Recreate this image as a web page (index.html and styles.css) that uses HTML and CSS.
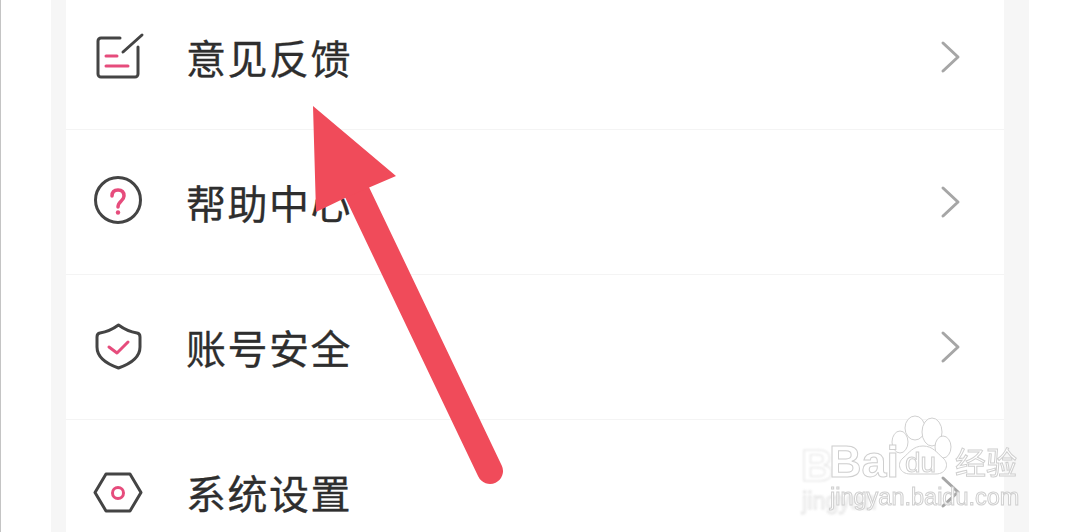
FILE: index.html
```html
<!DOCTYPE html>
<html lang="zh-CN">
<head>
  <meta charset="UTF-8">
  <meta name="viewport" content="width=device-width, initial-scale=1.0">
  <title>设置</title>
  <link rel="stylesheet" href="styles.css">
</head>
<body>

  <div class="screen">
    <!-- Settings list -->
    <div class="list-wrap">
      <div class="list">
        <div class="row">
          <svg class="row-icon" viewBox="0 0 56 56">
            <path class="ink" d="M30 7H11a3 3 0 0 0-3 3v33a3 3 0 0 0 3 3h34a3 3 0 0 0 3-3V16"/>
            <path class="ink" d="M33 21L52 4"/>
            <path class="accent" d="M16 25H27M16 35H38"/>
          </svg>
          <span class="row-label">意见反馈</span>
          <svg class="chevron" viewBox="0 0 24 36"><path d="M5 4L20 18L5 32"/></svg>
        </div>
        <div class="row">
          <svg class="row-icon" viewBox="0 0 56 56">
            <circle class="ink" cx="28" cy="24" r="22.5"/>
            <path class="accent thick" d="M22 20c0-4 2.500-6 6-6s6 2 6 6c0 5-6 5-6 11"/>
            <circle class="accent-dot" cx="28" cy="36.500" r="2.200"/>
          </svg>
          <span class="row-label">帮助中心</span>
          <svg class="chevron" viewBox="0 0 24 36"><path d="M5 4L20 18L5 32"/></svg>
        </div>
        <div class="row">
          <svg class="row-icon" viewBox="0 0 56 56">
            <path class="ink" d="M28.500 4C34 8 41 11 47 12Q50 12.500 50 16V26C50 37 40 43 28.500 47C17 43 7 37 7 26V16Q7 12.500 10 12C16 11 23 8 28.500 4Z"/>
            <path class="accent" d="M19 26L27 32L38 21"/>
          </svg>
          <span class="row-label">账号安全</span>
          <svg class="chevron" viewBox="0 0 24 36"><path d="M5 4L20 18L5 32"/></svg>
        </div>
        <div class="row">
          <svg class="row-icon" viewBox="0 0 56 56">
            <path class="ink" d="M5 26.500L16 8H40L51 26.500L40 45H16Z"/>
            <circle class="accent" cx="28" cy="27" r="5.500"/>
          </svg>
          <span class="row-label">系统设置</span>
          <svg class="chevron" viewBox="0 0 24 36"><path d="M5 4L20 18L5 32"/></svg>
        </div>
      </div>
    </div>

    <!-- Red arrow drawn on top of the screenshot -->
    <svg class="arrow" viewBox="0 0 1079 532">
      <path class="arrow-shaft" d="M356 190L490 471"/>
      <path class="arrow-head" d="M313 106L396 176L368 188L345 198L316 212Z"/>
    </svg>

    <!-- Watermark -->
    <div class="mark mark-back">
      <span class="mark-bai">B</span>
      <span class="mark-url">jingyan</span>
    </div>
    <div class="mark">
      <svg class="paw" viewBox="0 0 70 70">
        <ellipse cx="25" cy="17" rx="10" ry="12"/>
        <ellipse cx="42" cy="21" rx="10" ry="14"/>
        <ellipse cx="10" cy="31" rx="8" ry="11"/>
        <ellipse cx="53" cy="36" rx="8" ry="11"/>
        <path d="M33 35C43 35 47 42 53 47C60 53 56 63 46 63H20C10 63 6 53 13 47C19 42 23 35 33 35Z"/>
      </svg>
      <span class="mark-bai">Bai</span>
      <span class="mark-du">du</span>
      <span class="mark-cn">经验</span>
      <span class="mark-url">jingyan.baidu.com</span>
    </div>
  </div>

</body>
</html>
```

FILE: styles.css
```css
html, body {
  margin: 0;
  padding: 0;
  background-color: #fff;
}

.screen {
  position: relative;
  width: 1079px;
  height: 532px;
  overflow: hidden;
  box-sizing: border-box;
  border-left: 1px solid #c4c4c4;
  font-family: "Noto Sans CJK SC", "Liberation Sans", sans-serif;
  filter: blur(0.4px);
}

.list-wrap {
  display: flow-root;
  width: 978px;
  margin-left: 50px;
  padding: 0 25px 0 15px;
  box-sizing: border-box;
  height: 532px;
  background-color: #f6f6f6;
}

.list {
  margin-top: -15px;
  background-color: #fff;
}

.row {
  display: flex;
  align-items: center;
  height: 145px;
  box-sizing: border-box;
  padding: 4px 42px 0 24px;
  border-bottom: 1px solid #f4f4f4;
}

.row-icon {
  width: 56px;
  height: 56px;
  flex-shrink: 0;
}

.row-icon path,
.row-icon circle {
  fill: none;
  stroke-width: 3;
  stroke-linecap: round;
  stroke-linejoin: round;
}

.row-icon .ink {
  stroke: #444;
}

.row-icon .accent {
  stroke: #e64c7c;
}

.row-icon .thick {
  stroke-width: 3.5;
}

.row-icon .accent-dot {
  fill: #e64c7c;
  stroke: none;
}

.row-label {
  margin: 0 0 4px 40px;
  font-size: 40px;
  letter-spacing: 1.500px;
  color: #2e2e2e;
  line-height: 56px;
  -webkit-text-stroke: 0.3px #2e2e2e;
}

.chevron {
  width: 24px;
  height: 36px;
  margin-left: auto;
  margin-bottom: 4px;
}

.chevron path {
  fill: none;
  stroke: #a6a6a6;
  stroke-width: 3;
  stroke-linecap: round;
  stroke-linejoin: round;
}

.arrow {
  position: absolute;
  top: 0;
  left: -1px;
  width: 1079px;
  height: 532px;
}

.arrow-shaft {
  fill: none;
  stroke: #f04b5a;
  stroke-width: 26;
  stroke-linecap: round;
}

.arrow-head {
  fill: #f04b5a;
}

/* Watermark */
.mark {
  position: absolute;
  top: 0;
  left: -1px;
  width: 1079px;
  height: 532px;
  font-family: "Liberation Sans", "Noto Sans CJK SC", sans-serif;
  color: #fff;
  -webkit-text-stroke: 1px #cfcfcf;
}

.mark span {
  position: absolute;
  white-space: nowrap;
}

.mark-back {
  opacity: 0.6;
  filter: blur(1px);
  transform: translate(-28px, 4px);
}

.paw {
  position: absolute;
  left: 890px;
  top: 411px;
  width: 70px;
  height: 70px;
}

.paw ellipse,
.paw path {
  fill: #fff;
  stroke: #cfcfcf;
  stroke-width: 1;
}

.mark-bai {
  left: 829px;
  top: 436px;
  font-size: 45px;
  font-weight: bold;
  line-height: 52px;
}

.mark-du {
  left: 905px;
  top: 448px;
  font-size: 28px;
  line-height: 30px;
}

.mark-cn {
  left: 955px;
  top: 442px;
  font-size: 31px;
  line-height: 38px;
  font-family: "Noto Sans CJK SC", sans-serif;
}

.mark-url {
  left: 830px;
  top: 483px;
  font-size: 23.500px;
  line-height: 28px;
}
```
